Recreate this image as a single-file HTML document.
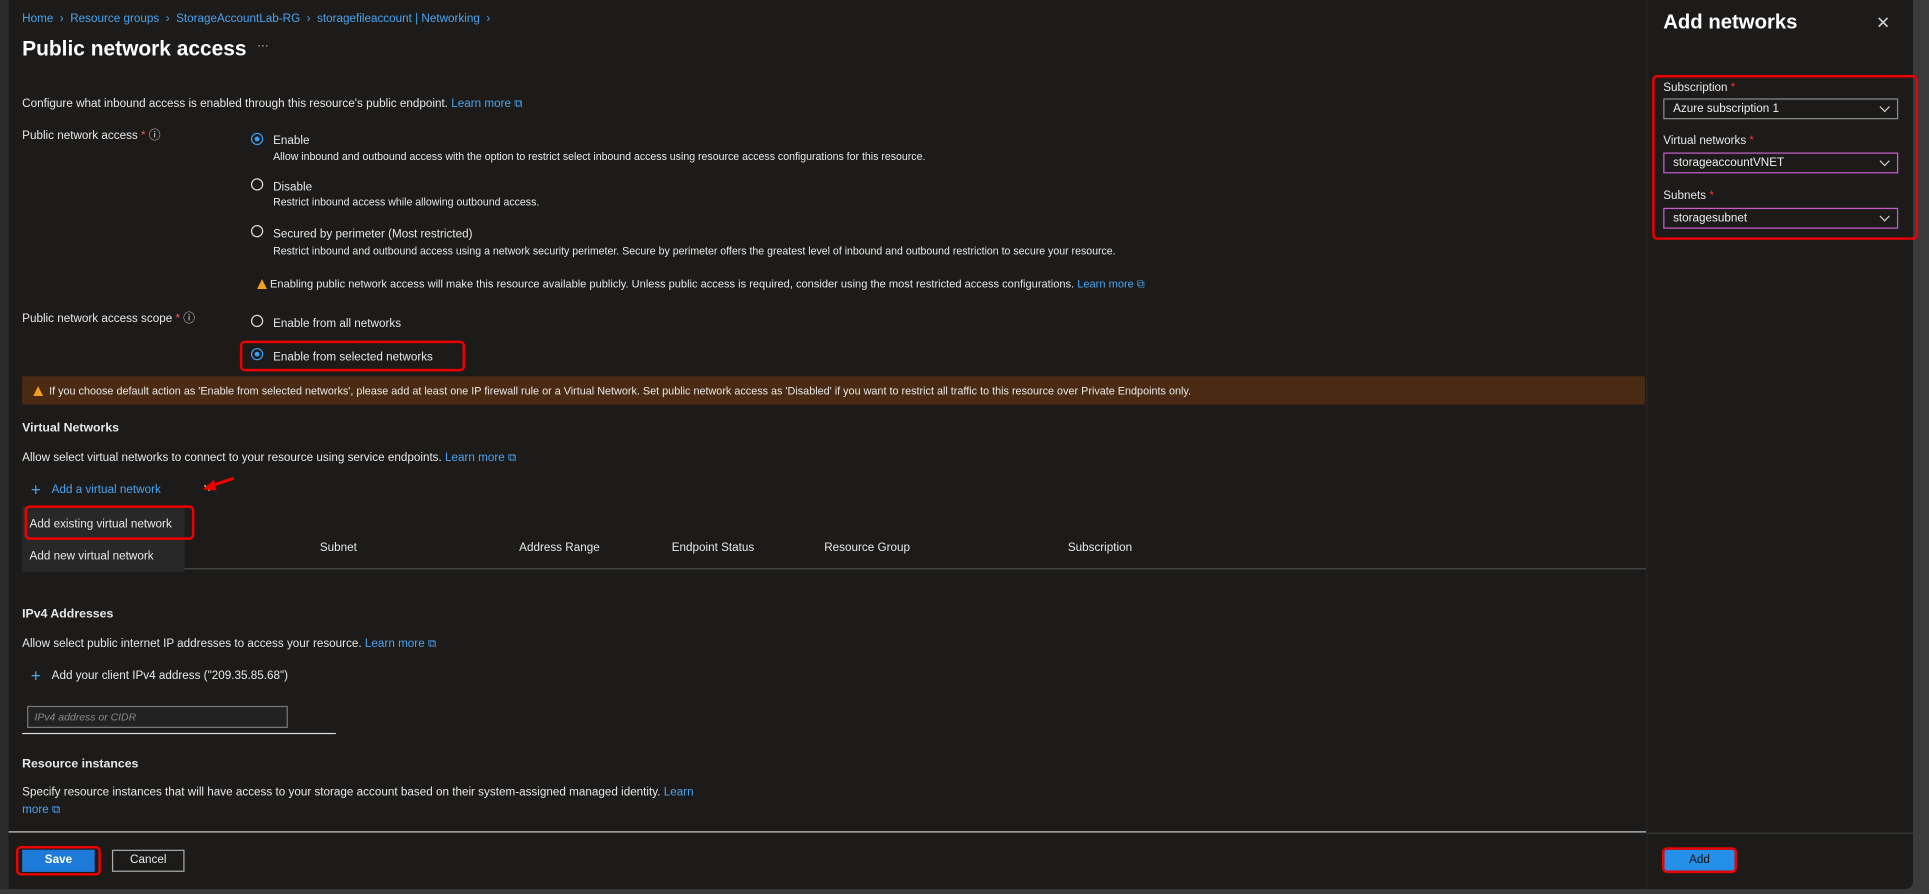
<!DOCTYPE html>
<html><head><meta charset="utf-8"><style>
html,body{margin:0;padding:0;width:1929px;height:894px;overflow:hidden;background:#3b3b3b}
#s{position:absolute;left:0;top:0;width:1568px;height:727px;transform:scale(1.2302,1.2297);transform-origin:0 0;font-family:"Liberation Sans",sans-serif;color:#e8e8e8;font-size:9.5px}
.a{position:absolute;white-space:nowrap}
.b{color:#4ba3ee}
.h{font-weight:bold;font-size:10px}
.r{position:absolute;width:10px;height:10px;border:1px solid #ddd;border-radius:50%;box-sizing:border-box}
.r.on{border-color:#3c9cf0}
.r.on::after{content:"";position:absolute;left:2px;top:2px;width:4px;height:4px;border-radius:50%;background:#3c9cf0}
.red{position:absolute;border:2px solid #e00;border-radius:4px;box-sizing:border-box}
.sel{position:absolute;height:17px;box-sizing:border-box;border:1px solid #8a8a8a;padding-left:7px;line-height:15px;font-size:9.5px;color:#eee}
.sel::after{content:"";position:absolute;right:7px;top:3px;width:5px;height:5px;border-right:1px solid #ccc;border-bottom:1px solid #ccc;transform:rotate(45deg)}
.tri{display:inline-block;width:0;height:0;border-left:4px solid transparent;border-right:4px solid transparent;border-bottom:8px solid #f0a020;vertical-align:-1px}
.d{font-size:8.6px}
</style></head><body><div id="s">
<div class="a" style="left:0;top:0;width:1555px;height:723px;background:#1c1b1a;border-radius:0 0 6px 0"></div>
<div class="a" style="left:0;top:0;width:7px;height:723px;background:#2a2a2a"></div>
<div class="a" style="left:1338px;top:0;width:1px;height:723px;background:#262626"></div>
<div class="a b" style="left:18px;top:10px;font-size:9.5px">Home &nbsp;›&nbsp; Resource groups &nbsp;›&nbsp; StorageAccountLab-RG &nbsp;›&nbsp; storagefileaccount | Networking &nbsp;›</div>
<div class="a" style="left:18px;top:30px;font-size:17px;font-weight:bold;color:#fff">Public network access</div>
<div class="a" style="left:209px;top:32px;color:#ccc">···</div>
<div class="a" style="left:18px;top:79px">Configure what inbound access is enabled through this resource's public endpoint. <span class="b">Learn more ⧉</span></div>
<div class="a" style="left:18px;top:102px">Public network access <span style="color:#e55">*</span> ⓘ</div>
<div class="r on" style="left:204px;top:108px"></div>
<div class="a" style="left:222px;top:109px;font-size:9.5px">Enable</div>
<div class="a d" style="left:222px;top:122px">Allow inbound and outbound access with the option to restrict select inbound access using resource access configurations for this resource.</div>
<div class="r" style="left:204px;top:145px"></div>
<div class="a" style="left:222px;top:147px;font-size:9.5px">Disable</div>
<div class="a d" style="left:222px;top:159px">Restrict inbound access while allowing outbound access.</div>
<div class="r" style="left:204px;top:183px"></div>
<div class="a" style="left:222px;top:185px;font-size:9.5px">Secured by perimeter (Most restricted)</div>
<div class="a d" style="left:222px;top:199px">Restrict inbound and outbound access using a network security perimeter. Secure by perimeter offers the greatest level of inbound and outbound restriction to secure your resource.</div>
<div class="a" style="left:209px;top:226px;font-size:9px"><span class="tri"></span> Enabling public network access will make this resource available publicly. Unless public access is required, consider using the most restricted access configurations. <span class="b">Learn more ⧉</span></div>
<div class="a" style="left:18px;top:251px">Public network access scope <span style="color:#e55">*</span> ⓘ</div>
<div class="r" style="left:204px;top:256px"></div>
<div class="a" style="left:222px;top:258px">Enable from all networks</div>
<div class="red" style="left:195px;top:277px;width:183px;height:25px"></div>
<div class="r on" style="left:204px;top:283px"></div>
<div class="a" style="left:222px;top:285px">Enable from selected networks</div>
<div class="a" style="left:18px;top:306px;width:1319px;height:23px;background:#4a2a12"></div>
<div class="a" style="left:27px;top:313px;font-size:8.8px"><span class="tri"></span> &nbsp;If you choose default action as 'Enable from selected networks', please add at least one IP firewall rule or a Virtual Network. Set public network access as 'Disabled' if you want to restrict all traffic to this resource over Private Endpoints only.</div>
<div class="a h" style="left:18px;top:343px">Virtual Networks</div>
<div class="a" style="left:18px;top:367px">Allow select virtual networks to connect to your resource using service endpoints. <span class="b">Learn more ⧉</span></div>
<div class="a b" style="left:25px;top:390px;font-size:14px;font-weight:300">+</div>
<div class="a b" style="left:42px;top:393px">Add a virtual network</div>
<div class="a" style="left:167px;top:392px;width:5px;height:5px;border-right:1px solid #ccc;border-bottom:1px solid #ccc;transform:rotate(45deg)"></div>
<svg class="a" style="left:160px;top:385px" width="32" height="18"><line x1="30" y1="4" x2="12" y2="10" stroke="#e00" stroke-width="2.5"/><polygon points="5,13 14,5 16,14" fill="#e00"/></svg>
<div class="a" style="left:18px;top:412px;width:132px;height:53px;background:#282828"></div>
<div class="a" style="left:24px;top:421px">Add existing virtual network</div>
<div class="red" style="left:20px;top:411px;width:138px;height:28px"></div>
<div class="a" style="left:24px;top:447px">Add new virtual network</div>
<div class="a" style="left:260px;top:440px">Subnet</div>
<div class="a" style="left:422px;top:440px">Address Range</div>
<div class="a" style="left:546px;top:440px">Endpoint Status</div>
<div class="a" style="left:670px;top:440px">Resource Group</div>
<div class="a" style="left:868px;top:440px">Subscription</div>
<div class="a" style="left:150px;top:462px;width:1188px;height:1px;background:#4a4a4a"></div>
<div class="a h" style="left:18px;top:494px">IPv4 Addresses</div>
<div class="a" style="left:18px;top:518px">Allow select public internet IP addresses to access your resource. <span class="b">Learn more ⧉</span></div>
<div class="a b" style="left:25px;top:541px;font-size:14px">+</div>
<div class="a" style="left:42px;top:544px">Add your client IPv4 address ("209.35.85.68")</div>
<div class="a" style="left:22px;top:574px;width:212px;height:18px;border:1px solid #777;box-sizing:border-box;background:#222"></div>
<div class="a" style="left:28px;top:578px;font-style:italic;color:#888;font-size:8.5px">IPv4 address or CIDR</div>
<div class="a" style="left:18px;top:596px;width:255px;height:1px;background:#ddd"></div>
<div class="a h" style="left:18px;top:616px">Resource instances</div>
<div class="a" style="left:18px;top:639px">Specify resource instances that will have access to your storage account based on their system-assigned managed identity. <span class="b">Learn</span></div>
<div class="a b" style="left:18px;top:653px">more ⧉</div>
<div class="a" style="left:7px;top:676px;width:1331px;height:1px;background:#ccc"></div>
<div class="a" style="left:1339px;top:677px;width:1216px;height:1px;background:#3a3a3a"></div>
<div class="a" style="left:18px;top:691px;width:59px;height:18px;background:#1e7ad8;color:#fff;text-align:center;line-height:18px;font-weight:bold">Save</div>
<div class="red" style="left:13px;top:688px;width:69px;height:24px"></div>
<div class="a" style="left:91px;top:691px;width:59px;height:18px;border:1px solid #aaa;box-sizing:border-box;text-align:center;line-height:16px">Cancel</div>
<div class="a" style="left:1352px;top:9px;font-size:16.5px;font-weight:bold;color:#fff">Add networks</div>
<div class="a" style="left:1525px;top:10px;font-size:14px;color:#ccc">✕</div>
<div class="red" style="left:1343px;top:61px;width:216px;height:134px"></div>
<div class="a" style="left:1352px;top:66px">Subscription <span style="color:#e33">*</span></div>
<div class="sel" style="left:1352px;top:80px;width:191px">Azure subscription 1</div>
<div class="a" style="left:1352px;top:109px">Virtual networks <span style="color:#e33">*</span></div>
<div class="sel" style="left:1352px;top:124px;width:191px;border-color:#c45ec8">storageaccountVNET</div>
<div class="a" style="left:1352px;top:154px">Subnets <span style="color:#e33">*</span></div>
<div class="sel" style="left:1352px;top:169px;width:191px;border-color:#c45ec8">storagesubnet</div>
<div class="a" style="left:1353px;top:691px;width:57px;height:17px;background:#2490ea;color:#111;text-align:center;line-height:17px;font-size:9.5px">Add</div>
<div class="red" style="left:1351px;top:689px;width:61px;height:21px"></div>
</div></body></html>
